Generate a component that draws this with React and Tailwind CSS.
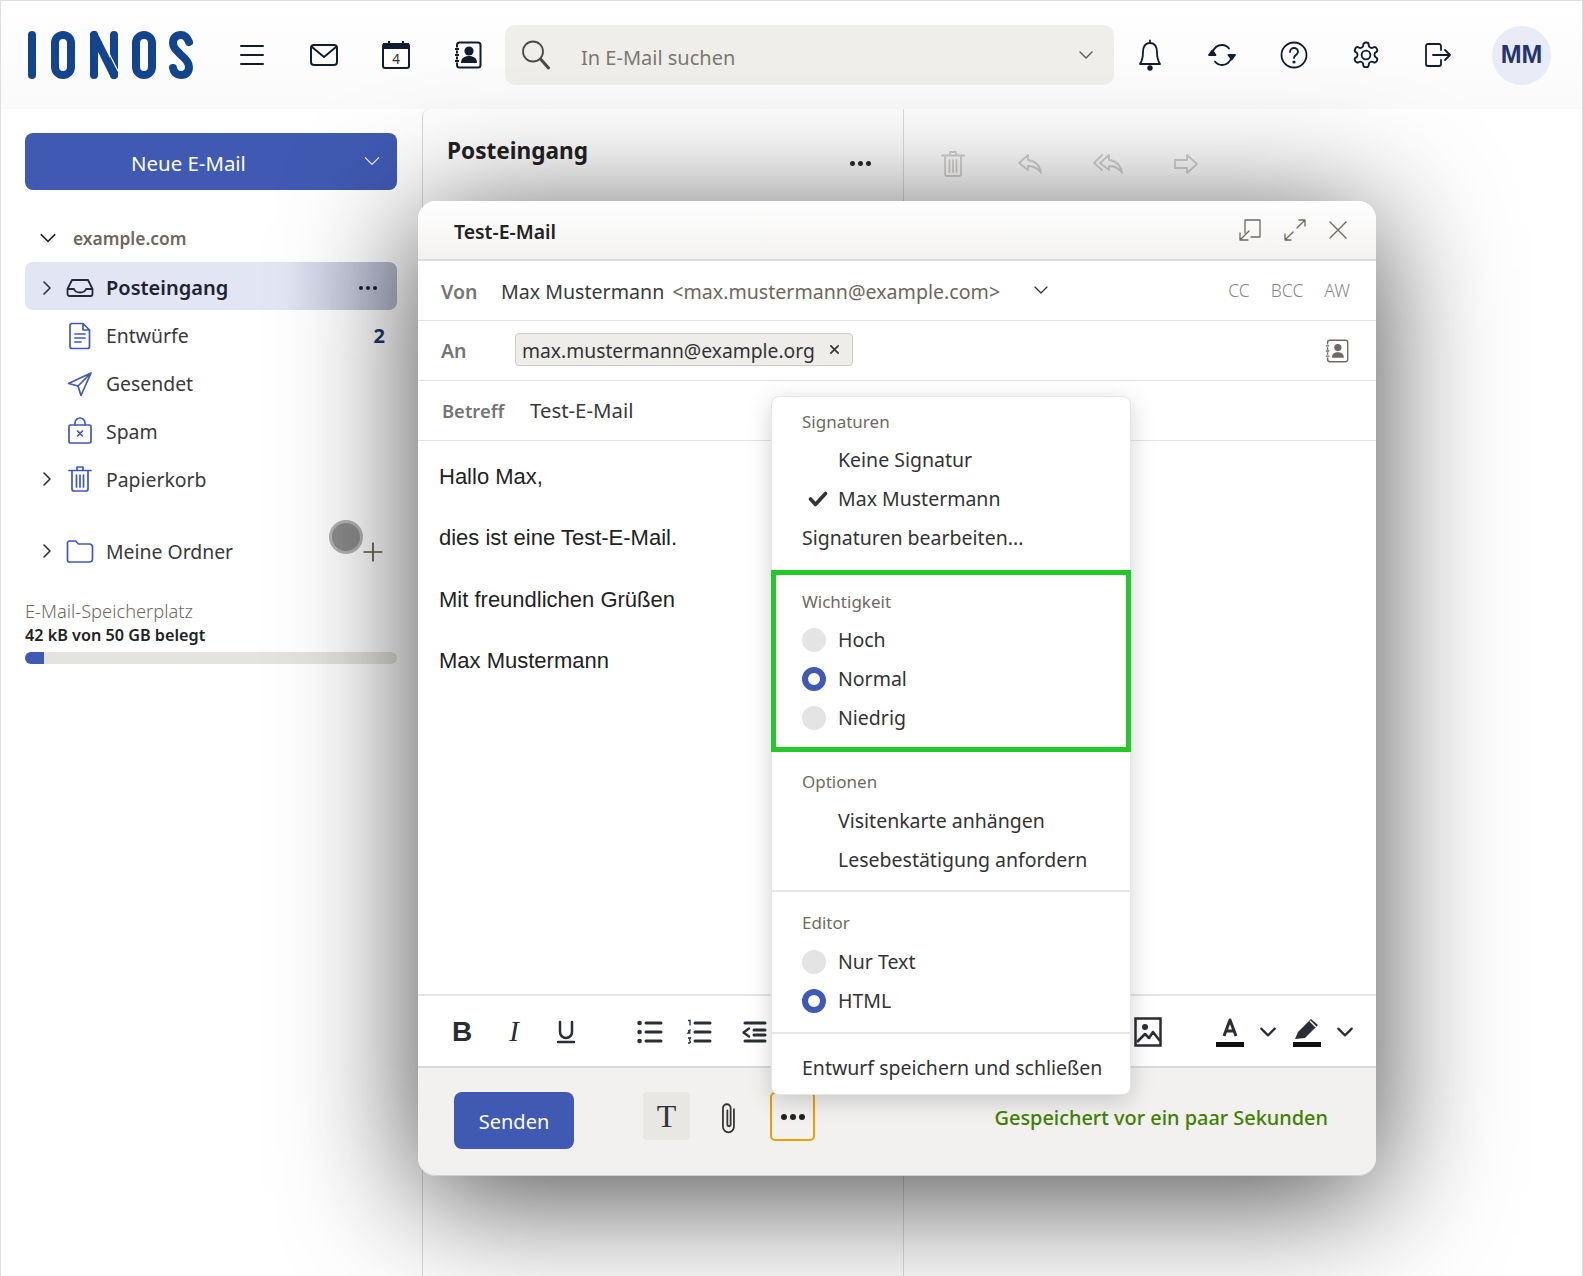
import React from "react";

const S = ({ w = 32, h = 32, vb = "0 0 32 32", c = "#111c33", sw = 2, children, className = "" }) => (
  <svg width={w} height={h} viewBox={vb} fill="none" stroke={c} strokeWidth={sw} strokeLinecap="round" strokeLinejoin="round" className={className}>
    {children}
  </svg>
);

const Chevron = ({ dir = "down", size = 16, c = "#222", sw = 1.6 }) => {
  const d = { down: "M2 5l6 6 6-6", right: "M5 2l6 6-6 6" }[dir];
  return <S w={size} h={size} vb="0 0 16 16" c={c} sw={sw}><path d={d} /></S>;
};

const Logo = () => (
  <svg width="168" height="50" viewBox="0 0 168 50" fill="none" stroke="#13458f" strokeWidth="8" strokeLinecap="round" strokeLinejoin="round">
    <path d="M4 5v40" />
    <rect x="27" y="5" width="16" height="40" rx="8" />
    <path d="M66 5v40M86 5v40" />
    <path d="M66 5L86 45" />
    <path d="M70.5 3L90 41" stroke="#fff" strokeWidth="1.2" />
    <rect x="108" y="5" width="16" height="40" rx="8" />
    <path d="M161 12c-2-5-5-7-8-7-5 0-8 3-8 8 0 4 2 6 8 12 6 5 8 8 8 12 0 5-3 8-8 8-4 0-7-2-8-7" />
  </svg>
);

const HeaderCell = ({ children }) => <div className="w-[72px] h-full flex items-center justify-center shrink-0">{children}</div>;

const Radio = ({ on }) => on
  ? <span className="w-[24px] h-[24px] rounded-full border-[6px] border-[#3f5ab5] bg-white shrink-0" />
  : <span className="w-[24px] h-[24px] rounded-full bg-[#e4e4e4] shrink-0" />;

const MenuLabel = ({ children }) => <div className="h-[22px] leading-[22px] text-[17px] text-[#6f6a60] pl-[30px]">{children}</div>;

const MenuItem = ({ lead, children, first }) => (
  <div className={`h-[39px] flex items-center text-[19.5px] text-[#333] pl-[30px] ${first ? "mt-[7px]" : ""}`}>
    <span className="w-[36px] shrink-0 flex items-center">{lead}</span>
    <span>{children}</span>
  </div>
);

const Row = ({ chevron, icon, children, active, right }) => (
  <div className={`flex items-center rounded-[8px] pl-[14px] pr-[18px] ${active ? "h-[48px] pt-[3px] bg-gradient-to-r from-[#e2e5f3] from-[70%] to-[#b3b6cc] font-semibold text-[20px] text-[#1d2230]" : "h-[47.8px] pt-[4px] text-[19.4px] text-[#3a3a3a]"}`}>
    <span className="w-[16px] flex items-center justify-center shrink-0">{chevron && <Chevron dir="right" size={16} c="#2a2f3a" />}</span>
    <span className="w-[28px] ml-[11px] flex items-center justify-center shrink-0">{icon}</span>
    <span className="ml-[12px]">{children}</span>
    {right && <span className="ml-auto">{right}</span>}
  </div>
);

const Dots = ({ c = "#222", size = 4 }) => (
  <span className="flex gap-[3px]">
    {[0, 1, 2].map((i) => <span key={i} style={{ width: size, height: size, background: c }} className="rounded-full" />)}
  </span>
);

const B = "#4059b5";

const TbCell = ({ children, w = "w-[52px]" }) => <div className={`${w} h-full flex items-center justify-center shrink-0`}>{children}</div>;

export default function App() {
  return (
    <div className="relative w-[1583px] h-[1276px] overflow-hidden flex flex-col bg-white border-t border-l border-r border-[#dedede] font-['Noto_Sans',sans-serif]">
      {/* Top bar */}
      <header className="h-[108px] shrink-0 flex items-center bg-gradient-to-b from-white to-[#fafafa]">
        <div className="w-[215px] shrink-0 pl-[27px] flex items-center"><Logo /></div>
        <HeaderCell>
          <S w={26} h={22} vb="0 0 26 22" sw={2}><path d="M2 2h22M2 11h22M2 20h22" /></S>
        </HeaderCell>
        <HeaderCell>
          <S w={30} h={24} vb="0 0 30 24" sw={2}><rect x="2" y="2" width="26" height="20" rx="3" /><path d="M3 4l12 10L27 4" /></S>
        </HeaderCell>
        <HeaderCell>
          <svg width="30" height="30" viewBox="0 0 30 30" fill="none">
            <rect x="2" y="4" width="26" height="24" rx="2" stroke="#111c33" strokeWidth="2" />
            <rect x="2" y="3" width="26" height="6" fill="#111c33" />
            <path d="M8 1v3M22 1v3" stroke="#111c33" strokeWidth="2" />
            <text x="15" y="24" textAnchor="middle" fontSize="13.5" fill="#333" fontFamily="Noto Sans, sans-serif">4</text>
          </svg>
        </HeaderCell>
        <HeaderCell>
          <svg width="28" height="28" viewBox="0 0 28 28" fill="none">
            <rect x="3" y="1.500" width="23.500" height="25" rx="2.500" stroke="#111c33" strokeWidth="2" />
            <circle cx="15" cy="10" r="4.600" fill="#111c33" />
            <path d="M7 22c0-5 3.500-7 8-7s8 2 8 7z" fill="#111c33" />
            <path d="M0 8h5M0 14h5M0 20h5" stroke="#fff" strokeWidth="3" />
            <path d="M1 8h4M1 14h4M1 20h4" stroke="#111c33" strokeWidth="2" />
          </svg>
        </HeaderCell>
        <div className="w-[609px] h-[60px] ml-px shrink-0 rounded-[10px] bg-[#efeeeb] flex items-center">
          <span className="ml-[15px] w-[32px] flex items-center">
            <S w={32} h={32} vb="0 0 32 32" c="#4a4a45" sw={1.800}><circle cx="13" cy="12.500" r="10" /><path d="M20.500 20l8 9" strokeWidth="3" /></S>
          </span>
          <span className="ml-[29px] text-[20px] text-[#7b7870] relative top-[3px]">In E-Mail suchen</span>
          <span className="ml-auto mr-[20px]"><Chevron c="#555" size={16} sw={1.400} /></span>
        </div>
        <HeaderCell>
          <S w={26} h={32} vb="0 0 26 32" sw={1.800}><path d="M13 4c-5 0-7 4-7 9 0 6-1 9-3 12h20c-2-3-3-6-3-12 0-5-2-9-7-9zM13 1.500v2.500" /><circle cx="13" cy="29" r="1.800" fill="#111c33" /></S>
        </HeaderCell>
        <HeaderCell>
          <S w={28} h={28} vb="0 0 28 28" sw={1.800}>
            <path d="M4.500 11.500C6 7 9.500 4 14 4c3 0 5.500 1.500 7 3.500M23.500 16.500C22 21 18.500 24 14 24c-3 0-5.500-1.500-7-3.500" />
            <path d="M1 14h6.500L4.250 9.500zM20.500 14H27l-3.250 4.500z" fill="#111c33" />
          </S>
        </HeaderCell>
        <HeaderCell>
          <S w={28} h={28} vb="0 0 28 28" sw={1.800}>
            <circle cx="14" cy="14" r="12.500" />
            <path d="M10 11c0-2.500 2-4 4-4s4 1.500 4 3.800c0 3.200-4 3.200-4 6.200" />
            <circle cx="14" cy="21" r="0.700" fill="#111c33" />
          </S>
        </HeaderCell>
        <HeaderCell>
          <S w={30} h={30} vb="0 0 24 24" sw={1.500}>
            <path d="M12.200 2h-.4a2 2 0 0 0-2 2v.2a2 2 0 0 1-1 1.700l-.4.2a2 2 0 0 1-2 0l-.2-.1a2 2 0 0 0-2.700.7l-.2.4a2 2 0 0 0 .7 2.700l.2.1a2 2 0 0 1 1 1.700v.5a2 2 0 0 1-1 1.700l-.2.1a2 2 0 0 0-.7 2.700l.2.4a2 2 0 0 0 2.700.7l.2-.1a2 2 0 0 1 2 0l.4.2a2 2 0 0 1 1 1.700v.2a2 2 0 0 0 2 2h.4a2 2 0 0 0 2-2v-.2a2 2 0 0 1 1-1.700l.4-.2a2 2 0 0 1 2 0l.2.1a2 2 0 0 0 2.700-.7l.2-.4a2 2 0 0 0-.7-2.700l-.2-.1a2 2 0 0 1-1-1.700v-.5a2 2 0 0 1 1-1.700l.2-.1a2 2 0 0 0 .7-2.700l-.2-.4a2 2 0 0 0-2.700-.7l-.2.1a2 2 0 0 1-2 0l-.4-.2a2 2 0 0 1-1-1.700V4a2 2 0 0 0-2-2z" />
            <circle cx="12" cy="12" r="3.500" />
          </S>
        </HeaderCell>
        <HeaderCell>
          <S w={28} h={26} vb="0 0 28 26" sw={1.800}><path d="M17 8V4a2 2 0 0 0-2-2H4a2 2 0 0 0-2 2v18a2 2 0 0 0 2 2h11a2 2 0 0 0 2-2v-4M9 13h17M21 8l5 5-5 5" /></S>
        </HeaderCell>
        <div className="ml-[18px] w-[59px] h-[59px] rounded-full bg-[#e9ecf6] flex items-center justify-center text-[25px] font-bold text-[#24346f] font-['Liberation_Sans',sans-serif]">MM</div>
      </header>

      <div className="flex-1 flex min-h-0">
        {/* Sidebar */}
        <aside className="w-[421px] shrink-0 pl-[24px] pt-[24px]">
          <div className="w-[372px]">
            <div className="h-[57px] pt-[4px] rounded-[8px] bg-[#405ab3] flex items-center relative text-white text-[20.4px]">
              <span className="flex-1 text-center pr-[45px]">Neue E-Mail</span>
              <span className="absolute right-[16px] top-[19px]"><Chevron c="#fff" size={18} sw={1} /></span>
            </div>
            <div className="mt-[24px] h-[48px] flex items-center pl-[14px]">
              <Chevron c="#222" size={18} sw={1.300} />
              <span className="ml-[16px] text-[17.4px] font-semibold text-[#6e675c]">example.com</span>
            </div>
            <Row active chevron icon={
              <S w={28} h={20} vb="0 0 28 20" c="#232a3b" sw={1.800}><path d="M1.500 11L6 2h16l4.500 9v5a2 2 0 0 1-2 2h-21a2 2 0 0 1-2-2zM1.500 11H8c1 3 3 3.500 6 3.500s5-.5 6-3.500h6.500" /></S>
            } right={<span className="block mr-[2px]"><Dots c="#222" size={4} /></span>}>Posteingang</Row>
            <Row icon={
              <S w={22} h={28} vb="0 0 22 28" c={B} sw={1.700}><path d="M3 1.500h11l6.500 6.500v16.500a2 2 0 0 1-2 2H3a2 2 0 0 1-2-2v-21a2 2 0 0 1 2-2zM14 1.500V8h6.500M6 12h10M6 16h10M6 20h6" /></S>
            } right={<span className="font-bold text-[#24346f] mr-[-6px] text-[20px]">2</span>}>Entwürfe</Row>
            <Row icon={
              <S w={26} h={26} vb="0 0 26 26" c={B} sw={1.700}><path d="M24 2L1.500 12.500 11 15l3 9.500zM11 15L24 2" /></S>
            }>Gesendet</Row>
            <Row icon={
              <S w={26} h={28} vb="0 0 26 28" c={B} sw={1.700}><rect x="2" y="8" width="22" height="18" rx="1.500" /><path d="M8 8V6a5 5 0 0 1 10 0v2M10.500 14l5 5M15.500 14l-5 5" /></S>
            }>Spam</Row>
            <Row chevron icon={
              <S w={24} h={28} vb="0 0 24 28" c={B} sw={1.700}><path d="M1 5.500h22M9 5.500V2h6v3.500M4 5.500V24a2 2 0 0 0 2 2h12a2 2 0 0 0 2-2V5.500M8.500 10v12M12 10v12M15.500 10v12" /></S>
            }>Papierkorb</Row>
            <div className="mt-[24px] relative">
              <Row chevron icon={
                <S w={28} h={24} vb="0 0 28 24" c={B} sw={1.700}><path d="M1.500 4a2 2 0 0 1 2-2h6l3 3h11a3 3 0 0 1 3 3v12a3 3 0 0 1-3 3h-20a2 2 0 0 1-2-2z" /></S>
              } right={<span className="block mr-[-4px] mt-[2px]"><S w={20} h={20} vb="0 0 18 18" c="#5b554a" sw={1.500}><path d="M9 1v16M1 9h16" /></S></span>}>Meine Ordner</Row>
              <span className="absolute left-[304px] top-[-5px] w-[34px] h-[34px] rounded-full bg-[#8c8c8c] border-[3px] border-[#b4b4b4]" />
            </div>
            <div className="mt-[26px] text-[18.3px] leading-[24px] font-light text-[#6f6a60]">E-Mail-Speicherplatz</div>
            <div className="text-[16.200px] leading-[24px] font-semibold text-[#222]">42 kB von 50 GB belegt</div>
            <div className="mt-[5px] h-[12px] rounded-full bg-[#e5e3df] overflow-hidden">
              <div className="h-full w-[19px] bg-[#405ab3]" />
            </div>
          </div>
        </aside>

        {/* Message list column */}
        <section className="w-[482px] shrink-0 border-l border-r border-[#dcdcdc] rounded-tl-[8px] flex flex-col">
          <div className="h-[90px] pl-[24px] pr-[32px] flex justify-between relative">
            <span className="text-[22.6px] font-bold text-[#222] mt-[22px] leading-[40px]">Posteingang</span>
            <span className="mt-[52px]"><Dots c="#2a2a2a" size={5} /></span>
          </div>
        </section>

        {/* Reader column */}
        <section className="flex-1">
          <div className="flex items-center h-[110px] pl-[36px]">
            <span className="w-[26px] flex justify-center">
              <S w={24} h={28} vb="0 0 24 28" c="#d4d2ce" sw={1.800}><path d="M1 5.500h22M9 5.500V2h6v3.500M4 5.500V24a2 2 0 0 0 2 2h12a2 2 0 0 0 2-2V5.500M8.500 10v12M12 10v12M15.500 10v12" /></S>
            </span>
            <span className="w-[26px] ml-[51px] flex justify-center">
              <S w={26} h={24} vb="0 0 26 24" c="#d4d2ce" sw={1.800}><path d="M11 3L2 11l9 7v-4c6 0 10 2 13 7-1-7-5-12-13-13z" /></S>
            </span>
            <span className="w-[32px] ml-[49px] flex justify-center">
              <S w={32} h={24} vb="0 0 32 24" c="#d4d2ce" sw={1.800}><path d="M10 3L2 11l8 7M17 3L8 11l9 7v-4c6 0 10 2 13 7-1-7-5-12-13-13z" /></S>
            </span>
            <span className="w-[26px] ml-[49px] flex justify-center">
              <S w={26} h={22} vb="0 0 26 22" c="#d4d2ce" sw={1.800}><path d="M2 7h12V2l10 9-10 9v-5H2z" /></S>
            </span>
          </div>
        </section>
      </div>

      {/* Compose window */}
      <div className="absolute left-[417px] top-[200px] w-[958px] h-[975px] rounded-[18px] bg-white flex flex-col shadow-[0_20px_130px_rgba(0,0,0,0.72)]">
        <div className="h-[60px] shrink-0 rounded-t-[18px] bg-gradient-to-b from-white to-[#f3f2f0] border-b-2 border-[#dedcd8] flex items-center pl-[36px] pr-[28px]">
          <span className="text-[19.400px] font-semibold text-[#222] pt-[3px]">Test-E-Mail</span>
          <span className="ml-auto flex items-center gap-[21px]">
            <S w={24} h={24} vb="0 0 24 24" c="#6f6a60" sw={1.300}><path d="M7 15V2h15v17H13M2 22l9-9M2 15v7h8" /></S>
            <S w={24} h={24} vb="0 0 24 24" c="#6f6a60" sw={1.300}><path d="M14 10l8-8M16 2h6v6M2 22l8-8M2 16v6h6" /></S>
            <S w={20} h={20} vb="0 0 20 20" c="#6f6a60" sw={1.300}><path d="M2 2l16 16M18 2L2 18" /></S>
          </span>
        </div>

        <div className="h-[60px] shrink-0 pt-[2px] border-b border-[#e4e3e0] flex items-center pl-[23px] pr-[26px] text-[19.600px]">
          <span className="w-[60px] font-semibold text-[19.500px] text-[#757575]">Von</span>
          <span className="text-[#3a3a3a]">Max Mustermann</span>
          <span className="ml-[8px] text-[#6e675c]">&lt;max.mustermann@example.com&gt;</span>
          <span className="ml-[33px] relative -top-[2px]"><Chevron c="#333" size={16} sw={1.300} /></span>
          <span className="ml-auto flex gap-[21px] text-[17.500px] text-[#8a867e] font-light relative -top-[1px]"><span>CC</span><span>BCC</span><span>AW</span></span>
        </div>

        <div className="h-[60px] shrink-0 border-b border-[#e4e3e0] flex items-center pl-[23px] pr-[27px]">
          <span className="w-[74px] font-semibold text-[19.500px] text-[#757575]">An</span>
          <span className="h-[33px] w-[338px] rounded-[4px] border border-[#cfcdc8] bg-[#efedea] flex items-center pl-[6px] pr-[12px] text-[19.300px] text-[#333] relative -top-[1px]">
            <span className="pt-[3px]">max.mustermann@example.org</span>
            <span className="ml-auto"><S w={11} h={11} vb="0 0 12 12" c="#333" sw={1.800}><path d="M2 2l8 8M10 2l-8 8" /></S></span>
          </span>
          <span className="ml-auto">
            <svg width="24" height="24" viewBox="0 0 28 28" fill="none">
              <rect x="3" y="1.500" width="23.500" height="25" rx="2.500" stroke="#6f6a60" strokeWidth="1.600" />
              <circle cx="15" cy="10" r="4.200" fill="#6f6a60" />
              <path d="M8 22c0-4.500 3-6.500 7-6.500s7 2 7 6.500z" fill="#6f6a60" />
              <path d="M0 8h5M0 14h5M0 20h5" stroke="#fff" strokeWidth="3" />
              <path d="M1 8h4M1 14h4M1 20h4" stroke="#6f6a60" strokeWidth="1.600" />
            </svg>
          </span>
        </div>

        <div className="h-[60px] shrink-0 border-b border-[#e4e3e0] flex items-center pl-[24px]">
          <span className="w-[88px] font-semibold text-[18.400px] text-[#757575]">Betreff</span>
          <span className="text-[20.400px] text-[#3a3a3a]">Test-E-Mail</span>
        </div>

        <div className="flex-1 min-h-0 pl-[21px] pt-[19px] font-['Liberation_Sans',sans-serif] text-[22px] leading-[61.400px] text-[#222] border-b-2 border-[#e6e5e2]">
          <p className="-mt-[14px]">Hallo Max,</p>
          <p>dies ist eine Test-E-Mail.</p>
          <p>Mit freundlichen Grüßen</p>
          <p>Max Mustermann</p>
        </div>

        {/* Format bar */}
        <div className="h-[72px] pt-[2px] shrink-0 border-b-2 border-[#dcdad6] flex items-center justify-between pl-[18px] pr-[20px]">
          <div className="flex h-full items-center">
            <TbCell><span className="font-['Liberation_Sans',sans-serif] font-bold text-[28px] text-[#2a2d33]">B</span></TbCell>
            <TbCell><span className="font-['Liberation_Serif',serif] italic text-[29px] text-[#2a2d33]">I</span></TbCell>
            <TbCell>
              <S w={20} h={24} vb="0 0 20 24" c="#2a2d33" sw={2.500}><path d="M4 2v10a6 6 0 0 0 12 0V2M2 22h16" /></S>
            </TbCell>
            <div className="w-[32px]" />
            <TbCell>
              <S w={26} h={24} vb="0 0 26 24" c="#2a2d33" sw={3}><path d="M9 3h15M9 12h15M9 21h15" /><path d="M2.500 3h.1M2.500 12h.1M2.500 21h.1" strokeWidth="4.500" /></S>
            </TbCell>
            <TbCell w="w-[46px]">
              <svg width="26" height="26" viewBox="0 0 26 26" fill="none">
                <path d="M9 4h15M9 13h15M9 22h15" stroke="#2a2d33" strokeWidth="3" strokeLinecap="round" />
                <path d="M2 1.500h2v5M2 12l2-1v1l-2 2h2.500M2 19h2.500l-1 2 1 2-1 1H2" stroke="#2a2d33" strokeWidth="1.300" />
              </svg>
            </TbCell>
            <div className="w-[6px]" />
            <TbCell>
              <S w={26} h={24} vb="0 0 26 24" c="#2a2d33" sw={3}><path d="M4 3h20M13 10h11M13 15h11M4 21h20" /><path d="M8 8.500l-5.500 4 5.500 4" strokeWidth="2.300" /></S>
            </TbCell>
          </div>
          <div className="flex h-full items-center">
            <TbCell>
              <svg width="28" height="30" viewBox="0 0 28 30" fill="none">
                <rect x="1.500" y="1.500" width="25" height="27" stroke="#2a2d33" strokeWidth="2.500" />
                <circle cx="11" cy="10" r="3" fill="#2a2d33" />
                <path d="M3 25l8-8 4 4 4-6 7 9" stroke="#2a2d33" strokeWidth="2.500" strokeLinejoin="round" />
              </svg>
            </TbCell>
            <div className="w-[30px]" />
            <TbCell>
              <svg width="28" height="30" viewBox="0 0 28 30" fill="none">
                <path d="M8 19L14 3l6 16M10 14h8" stroke="#2a2d33" strokeWidth="3" strokeLinejoin="round" />
                <rect y="25" width="28" height="5" fill="#111" />
              </svg>
            </TbCell>
            <TbCell w="w-[24px]"><Chevron c="#2a2d33" size={18} sw={1.900} /></TbCell>
            <div className="w-[1px]" />
            <TbCell>
              <svg width="28" height="30" viewBox="0 0 28 30" fill="none">
                <path d="M2 22l3-7L18 2l7 6-13 13z" fill="#2a2d33" />
                <path d="M17 4l6 6" stroke="#fff" strokeWidth="1.500" />
                <rect y="25" width="28" height="5" fill="#111" />
              </svg>
            </TbCell>
            <TbCell w="w-[23px]"><Chevron c="#2a2d33" size={18} sw={1.900} /></TbCell>
          </div>
        </div>

        {/* Footer */}
        <div className="h-[108px] shrink-0 rounded-b-[18px] bg-[#f2f1ef] flex items-start pl-[36px] pt-[24px] border-b border-[#d2d0cc]">
          <div className="w-[120px] h-[57px] pt-[2px] rounded-[8px] bg-[#405ab3] text-white text-[20px] flex items-center justify-center">Senden</div>
          <div className="ml-[69px] w-[47px] h-[48px] rounded-[4px] bg-[#e8e7e4] flex items-center justify-center font-['Liberation_Serif',serif] text-[32px] text-[#333]">T</div>
          <div className="ml-[14px] w-[50px] h-[52px] flex items-center justify-center">
            <S w={22} h={36} vb="0 0 20 32" c="#333" sw={1.600}><path d="M14.500 8v16a5 5 0 0 1-10 0V7a3.500 3.500 0 0 1 7 0v15a1.500 1.500 0 0 1-3 0V9" /></S>
          </div>
          <div className="ml-[16px] w-[45px] h-[49px] rounded-[5px] border-2 border-[#e9a000] flex items-center justify-center"><Dots c="#222" size={6} /></div>
          <div className="ml-auto mr-[48px] h-[52px] flex items-center text-[19.900px] font-medium text-[#3f8000]">Gespeichert vor ein paar Sekunden</div>
        </div>
      </div>

      {/* Options menu */}
      <div className="absolute left-[770px] top-[395px] w-[360px] h-[699px] rounded-[8px] bg-white border border-[#e6e6e6] shadow-[0_6px_24px_rgba(0,0,0,0.18)] flex flex-col">
        <div className="pt-[14px] h-[173px] shrink-0">
          <MenuLabel>Signaturen</MenuLabel>
          <MenuItem first>Keine Signatur</MenuItem>
          <MenuItem lead={<span className="ml-[6px]"><S w={20} h={16} vb="0 0 20 16" c="#333" sw={3.600}><path d="M2.500 8l5 5.500L17.500 2.500" /></S></span>}>Max Mustermann</MenuItem>
          <div className="h-[39px] flex items-center text-[19.500px] text-[#333] pl-[30px]">Signaturen bearbeiten...</div>
        </div>
        <div className="-mx-[1px] h-[182px] shrink-0 border-[5px] border-[#22c927] pt-[16px]">
          <div className="-ml-[4px]">
            <MenuLabel>Wichtigkeit</MenuLabel>
            <div className="h-[7px]" />
            <MenuItem lead={<Radio />}>Hoch</MenuItem>
            <MenuItem lead={<Radio on />}>Normal</MenuItem>
            <MenuItem lead={<Radio />}>Niedrig</MenuItem>
          </div>
        </div>
        <div className="pt-[19px] h-[140px] shrink-0 border-b-2 border-[#e6e6e6]">
          <MenuLabel>Optionen</MenuLabel>
          <div className="h-[1px]" />
          <MenuItem first>Visitenkarte anhängen</MenuItem>
          <MenuItem>Lesebestätigung anfordern</MenuItem>
        </div>
        <div className="pt-[20px] h-[142px] shrink-0 border-b-2 border-[#e6e6e6]">
          <MenuLabel>Editor</MenuLabel>
          <div className="h-[1px]" />
          <MenuItem first lead={<Radio />}>Nur Text</MenuItem>
          <MenuItem lead={<Radio on />}>HTML</MenuItem>
        </div>
        <div className="pt-[14px]">
          <div className="h-[39px] flex items-center text-[19.500px] text-[#333] pl-[30px]">Entwurf speichern und schließen</div>
        </div>
      </div>
    </div>
  );
}
